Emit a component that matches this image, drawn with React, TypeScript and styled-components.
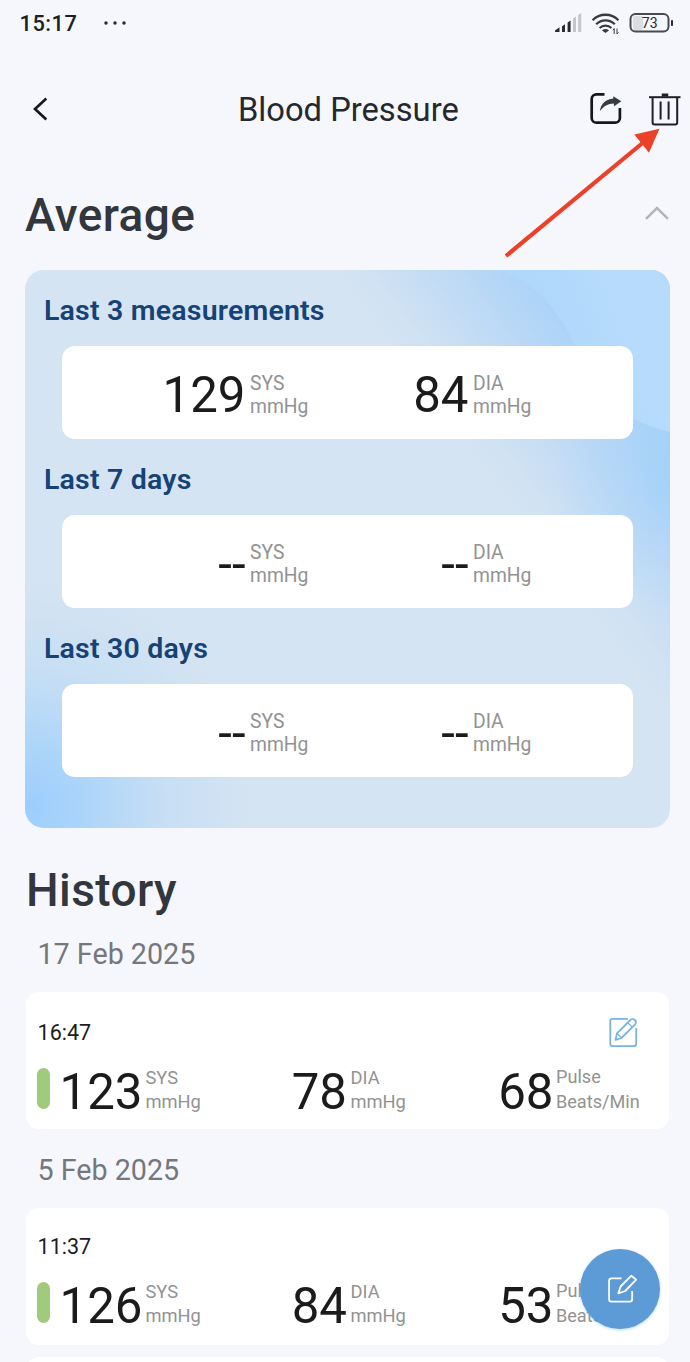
import React from "react";
import styled, { createGlobalStyle } from "styled-components";

const GlobalStyle = createGlobalStyle`
  *, *::before, *::after { box-sizing: border-box; }
  body { margin: 0; background: #f5f7fc; font-family: Roboto, sans-serif; }
  svg { display: block; flex: none; }
`;

const Screen = styled.div`
  position: relative;
  width: 690px;
  height: 1362px;
  overflow: hidden;
  background: #f5f7fc;
`;

const StatusBar = styled.div`
  display: flex;
  align-items: center;
  height: 48px;
  padding: 0 16px 0 19.5px;
`;

const Clock = styled.span`
  width: 60px;
  font-size: 21.8px;
  font-weight: 500;
  line-height: 48px;
  letter-spacing: 0.5px;
  color: #1d1f24;
`;

const Dots = styled.svg`
  margin: 0 auto 2px 23px;
`;

const Header = styled.header`
  display: flex;
  align-items: center;
  height: 122px;
  padding: 0 8px 0 32px;
`;

const Title = styled.h1`
  margin: 2px 0 0 188px;
  font-size: 32.7px;
  font-weight: 400;
  line-height: 40px;
  white-space: nowrap;
  color: #25282f;
`;

const HeaderActions = styled.div`
  display: flex;
  gap: 26.5px;
  margin-left: auto;
`;

const SectionHeader = styled.div`
  display: flex;
  align-items: center;
  justify-content: space-between;
  height: 100px;
  padding: 0 20px 10px 25px;
`;

const Chevron = styled.svg`
  margin-bottom: 5px;
`;

const SectionTitle = styled.h2`
  margin: 0;
  font-size: 46px;
  font-weight: 500;
  line-height: 56px;
  letter-spacing: 0.4px;
  color: #32363d;
`;

const AverageCard = styled.section`
  position: relative;
  width: 645px;
  height: 558px;
  margin-left: 25px;
  border-radius: 19px;
  overflow: hidden;
`;

const Backdrop = styled.svg`
  position: absolute;
  inset: 0;
`;

const AverageList = styled.div`
  position: relative;
  display: flex;
  flex-direction: column;
  padding: 22px 37px 0;
`;

const AverageTitle = styled.h3`
  margin: 0 0 17px -18px;
  font-size: 28.5px;
  font-weight: 600;
  line-height: 37px;
  letter-spacing: 0.2px;
  color: #164276;
`;

const AverageBox = styled.div`
  display: flex;
  height: 93px;
  margin-bottom: 22px;
  border-radius: 13px;
  background: #fff;
`;

const Reading = styled.div<{ $width: number; $gap: number }>`
  display: flex;
  align-items: center;
  justify-content: flex-end;
  gap: ${(p) => p.$gap}px;
  width: ${(p) => p.$width}px;
`;

const Value = styled.span`
  font-size: 49.2px;
  font-weight: 400;
  line-height: 58px;
  padding-top: 5px;
  color: #1b1b1c;
`;

const Unit = styled.span<{ $width: number; $size: number; $line: number; $top: number }>`
  width: ${(p) => p.$width}px;
  padding-top: ${(p) => p.$top}px;
  font-size: ${(p) => p.$size}px;
  line-height: ${(p) => p.$line}px;
  white-space: pre;
  color: #929292;
`;

const HistoryHeader = styled.div`
  display: flex;
  align-items: center;
  height: 99px;
  padding: 25px 0 0 26px;
`;

const DateLabel = styled.div<{ $height: number; $top: number }>`
  height: ${(p) => p.$height}px;
  padding: ${(p) => p.$top}px 0 0 37.5px;
  font-size: 28.7px;
  line-height: 36px;
  color: #75777b;
`;

const HistoryCard = styled.article<{ $top: number }>`
  width: 643px;
  height: 137px;
  margin-left: 26px;
  padding: ${(p) => p.$top}px 0 0 11px;
  border-radius: 13px;
  background: #fff;
`;

const CardTop = styled.div`
  display: flex;
  align-items: center;
  justify-content: space-between;
  height: 32px;
  padding-right: 31px;
`;

const Time = styled.span`
  margin: 0 0 0 0.6px;
  font-size: 21.5px;
  line-height: 32px;
  color: #1d1d1f;
`;

const CardBottom = styled.div`
  display: flex;
  align-items: center;
  height: 50px;
  margin-top: 15px;
`;

const LevelBar = styled.span`
  width: 13px;
  height: 41px;
  margin-bottom: 1px;
  border-radius: 7px;
  background: #a1cb7c;
`;

const NextCard = styled.div`
  height: 40px;
  width: 643px;
  margin: 12px 0 0 26px;
  border-radius: 13px;
  background: #fff;
`;

const AddButton = styled.button`
  position: absolute;
  left: 580px;
  top: 1249px;
  display: flex;
  align-items: center;
  justify-content: center;
  width: 80px;
  height: 80px;
  padding: 0 0 0 5px;
  border: 0;
  border-radius: 50%;
  background: #5c9bd6;
  box-shadow: 0 1px 3px rgba(92, 175, 240, 0.45);
`;

const Pointer = styled.svg`
  position: absolute;
  left: 500px;
  top: 124px;
`;

const StatusIcons = () => (
  <svg width="120" height="24" viewBox="554 12 120 24">
    <g fill="#2b2c2f">
      <path d="M555 32v-1.5l4.5-3.2V32z" />
      <path d="M562 26.3l3-2V32h-3z" />
      <path d="M567.6 22.5l3-2V32h-3z" />
    </g>
    <g fill="#c3c5c9">
      <path d="M573 18.5l3-2V32h-3z" />
      <path d="M578.2 15l3-2V32h-3z" />
    </g>
    <g fill="none" stroke="#3a3b3e" strokeWidth="2.3">
      <path d="M592.6 20.2a18 18 0 0 1 25.8 0" />
      <path d="M596.2 24.2a13 13 0 0 1 18.6 0" />
      <path d="M599.6 28a8.5 8.5 0 0 1 11.8 0" />
    </g>
    <path d="M602 30.4q3.5-2.6 7 0L605.5 33z" fill="#3a3b3e" />
    <path d="M614.2 34v-5.5l-1.4 1.7M617 28.5V34l1.4-1.7" fill="none" stroke="#3a3b3e" strokeWidth="1" />
    <rect x="633" y="16" width="10" height="14" rx="2" fill="#dcdde1" />
    <rect x="630.5" y="14" width="38" height="17.6" rx="5" fill="none" stroke="#4a4b4f" strokeWidth="2" />
    <rect x="671" y="20" width="2" height="6" rx="0.8" fill="#2b2c2f" />
    <text x="649.7" y="28.3" textAnchor="middle" fontFamily="Roboto, sans-serif" fontSize="14" fontWeight="400" fill="#2b2c2f">
      73
    </text>
  </svg>
);

const BackIcon = () => (
  <svg width="18" height="26" viewBox="32 96 18 26" fill="none" stroke="#17191e" strokeWidth="2.7">
    <path d="M46.3 98.500L35 109l11.3 10.500" />
  </svg>
);

const ShareIcon = () => (
  <svg width="32" height="34" viewBox="589.5 92 32 34">
    <path
      d="M604 94.300h-8a4.800 4.800 0 0 0-4.800 4.800v18.800a4.800 4.800 0 0 0 4.800 4.800h18.600a4.800 4.800 0 0 0 4.800-4.800V108"
      fill="none"
      stroke="#15171b"
      strokeWidth="2.7"
    />
    <path d="M599.3 111.200c1.200-7.600 6-12 13.500-12.600V96.200l8 5-7.200 5.100-.3-2.800c-6 .3-10 2.600-14 7.700z" fill="#383b40" />
  </svg>
);

const TrashIcon = () => (
  <svg width="34" height="34" viewBox="648 92 34 34" fill="none" stroke="#1d2026">
    <path d="M649 97.200h31.500" strokeWidth="2" />
    <path d="M662.500 96.500v-2.200h5v2.200" fill="#1d2026" strokeWidth="1.5" />
    <path d="M652.600 97.500v25q0 2 2 2h20.600q2 0 2-2v-25" strokeWidth="2" />
    <path d="M660.600 101.500v18M668.600 101.500v18" strokeWidth="2" />
  </svg>
);

const CardBackdrop = () => (
  <Backdrop width="645" height="558" viewBox="25 270 645 558">
    <defs>
      <linearGradient id="sweep" gradientUnits="userSpaceOnUse" x1="575" y1="290" x2="430" y2="399">
        <stop offset="0" stopColor="#a3d0f9" />
        <stop offset="0.5" stopColor="#bfdaf5" />
        <stop offset="0.85" stopColor="#d0e2f3" />
        <stop offset="1" stopColor="#d5e4f2" />
      </linearGradient>
      <radialGradient id="right" gradientUnits="userSpaceOnUse" cx="685" cy="480" r="130">
        <stop offset="0" stopColor="#9fd0fb" stopOpacity="0.8" />
        <stop offset="0.5" stopColor="#a6d2fa" stopOpacity="0.35" />
        <stop offset="1" stopColor="#a9d3f9" stopOpacity="0" />
      </radialGradient>
      <radialGradient id="corner" gradientUnits="userSpaceOnUse" cx="30" cy="805" r="225">
        <stop offset="0" stopColor="#9bcefd" />
        <stop offset="0.25" stopColor="#a3d1fb" stopOpacity="0.82" />
        <stop offset="0.6" stopColor="#a9d3f9" stopOpacity="0.32" />
        <stop offset="1" stopColor="#a9d3f9" stopOpacity="0" />
      </radialGradient>
      <linearGradient id="disc" gradientUnits="userSpaceOnUse" x1="550" y1="310" x2="610" y2="290">
        <stop offset="0" stopColor="#b0d8fb" />
        <stop offset="1" stopColor="#b6dbfc" />
      </linearGradient>
    </defs>
    <rect x="25" y="270" width="645" height="558" fill="url(#sweep)" />
    <rect x="25" y="270" width="645" height="558" fill="url(#right)" />
    <rect x="25" y="270" width="645" height="558" fill="url(#corner)" />
    <path d="M498 270Q548 284 575 347Q597 415 670 432V270z" fill="url(#disc)" />
  </Backdrop>
);

const NoteIcon = () => (
  <svg width="30" height="32" viewBox="608 1017 30 32" fill="none" stroke="#79b3e2" strokeWidth="1.8" strokeLinejoin="round">
    <path d="M628 1018.800h-15.500q-2.200 0-2.200 2.200v23q0 2.200 2.200 2.200h21.500q2.200 0 2.200-2.200V1028" />
    <path d="M615.500 1039.800l1.500-6.500 13.300-13.300a3 3 0 0 1 4.600 4.600L621.500 1038z" />
    <path d="M627.700 1022.600l4.600 4.600M617 1033.300l4.500 4.600" strokeWidth="1.3" />
  </svg>
);

const ComposeIcon = () => (
  <svg width="32" height="30" viewBox="607 1274 32 30" fill="none" stroke="#fff" strokeWidth="1.8" strokeLinejoin="round">
    <path d="M621.500 1278.300h-10q-2.400 0-2.400 2.400v18.500q0 2.400 2.400 2.400h18.300q2.400 0 2.400-2.400V1291" />
    <path d="M618.300 1293.300l2.300-6.800 10.800-10.800 4.800 4-11 11.300z" />
  </svg>
);

const averages = [
  { title: "Last 3 measurements", sys: "129", dia: "84" },
  { title: "Last 7 days", sys: "--", dia: "--" },
  { title: "Last 30 days", sys: "--", dia: "--" },
];

const history = [
  { date: "17 Feb 2025", time: "16:47", sys: "123", dia: "78", pulse: "68", editable: true },
  { date: "5 Feb 2025", time: "11:37", sys: "126", dia: "84", pulse: "53", editable: false },
];

export default function App() {
  return (
    <Screen>
      <GlobalStyle />
      <StatusBar>
        <Clock>15:17</Clock>
        <Dots width="26" height="6" viewBox="0 0 26 6" fill="#25272b">
          <circle cx="3" cy="3" r="1.7" />
          <circle cx="12" cy="3" r="1.7" />
          <circle cx="21" cy="3" r="1.7" />
        </Dots>
        <StatusIcons />
      </StatusBar>
      <Header>
        <BackIcon />
        <Title>Blood Pressure</Title>
        <HeaderActions>
          <ShareIcon />
          <TrashIcon />
        </HeaderActions>
      </Header>
      <SectionHeader>
        <SectionTitle>Average</SectionTitle>
        <Chevron width="26" height="16" viewBox="644 204 26 16" fill="none" stroke="#b3b4b6" strokeWidth="2.5">
          <path d="M646 217.800l11-10.800 11 10.800" />
        </Chevron>
      </SectionHeader>
      <AverageCard>
        <CardBackdrop />
        <AverageList>
          {averages.map((a) => (
            <React.Fragment key={a.title}>
              <AverageTitle>{a.title}</AverageTitle>
              <AverageBox>
                <Reading $width={248} $gap={4.5}>
                  <Value>{a.sys}</Value>
                  <Unit $width={60} $size={19.3} $line={23.5} $top={5}>{"SYS\nmmHg"}</Unit>
                </Reading>
                <Reading $width={223} $gap={4.5}>
                  <Value>{a.dia}</Value>
                  <Unit $width={60} $size={19.3} $line={23.5} $top={5}>{"DIA\nmmHg"}</Unit>
                </Reading>
              </AverageBox>
            </React.Fragment>
          ))}
        </AverageList>
      </AverageCard>
      <HistoryHeader>
        <SectionTitle>History</SectionTitle>
      </HistoryHeader>
      {history.map((h, i) => (
        <React.Fragment key={h.date}>
          <DateLabel $height={i === 0 ? 65 : 79} $top={i === 0 ? 9 : 23}>
            {h.date}
          </DateLabel>
          <HistoryCard $top={i === 0 ? 25 : 23}>
            <CardTop>
              <Time>{h.time}</Time>
              {h.editable && <NoteIcon />}
            </CardTop>
            <CardBottom>
              <LevelBar />
              <Reading $width={155.5} $gap={3}>
                <Value>{h.sys}</Value>
                <Unit $width={60} $size={18.3} $line={24.5} $top={2}>{"SYS\nmmHg"}</Unit>
              </Reading>
              <Reading $width={205} $gap={3.5}>
                <Value>{h.dia}</Value>
                <Unit $width={60} $size={18.3} $line={24.5} $top={2}>{"DIA\nmmHg"}</Unit>
              </Reading>
              <Reading $width={235.5} $gap={2.5}>
                <Value>{h.pulse}</Value>
                <Unit $width={90} $size={18.1} $line={24.5} $top={1}>{"Pulse\nBeats/Min"}</Unit>
              </Reading>
            </CardBottom>
          </HistoryCard>
        </React.Fragment>
      ))}
      <NextCard />
      <AddButton aria-label="Add measurement">
        <ComposeIcon />
      </AddButton>
      <Pointer width="164" height="138" viewBox="500 124 164 138">
        <path d="M506 256L645 141" stroke="#ec4128" strokeWidth="4.2" fill="none" />
        <path d="M659.500 128.800L634.300 134.500 649 152.700z" fill="#ec4128" />
      </Pointer>
    </Screen>
  );
}
